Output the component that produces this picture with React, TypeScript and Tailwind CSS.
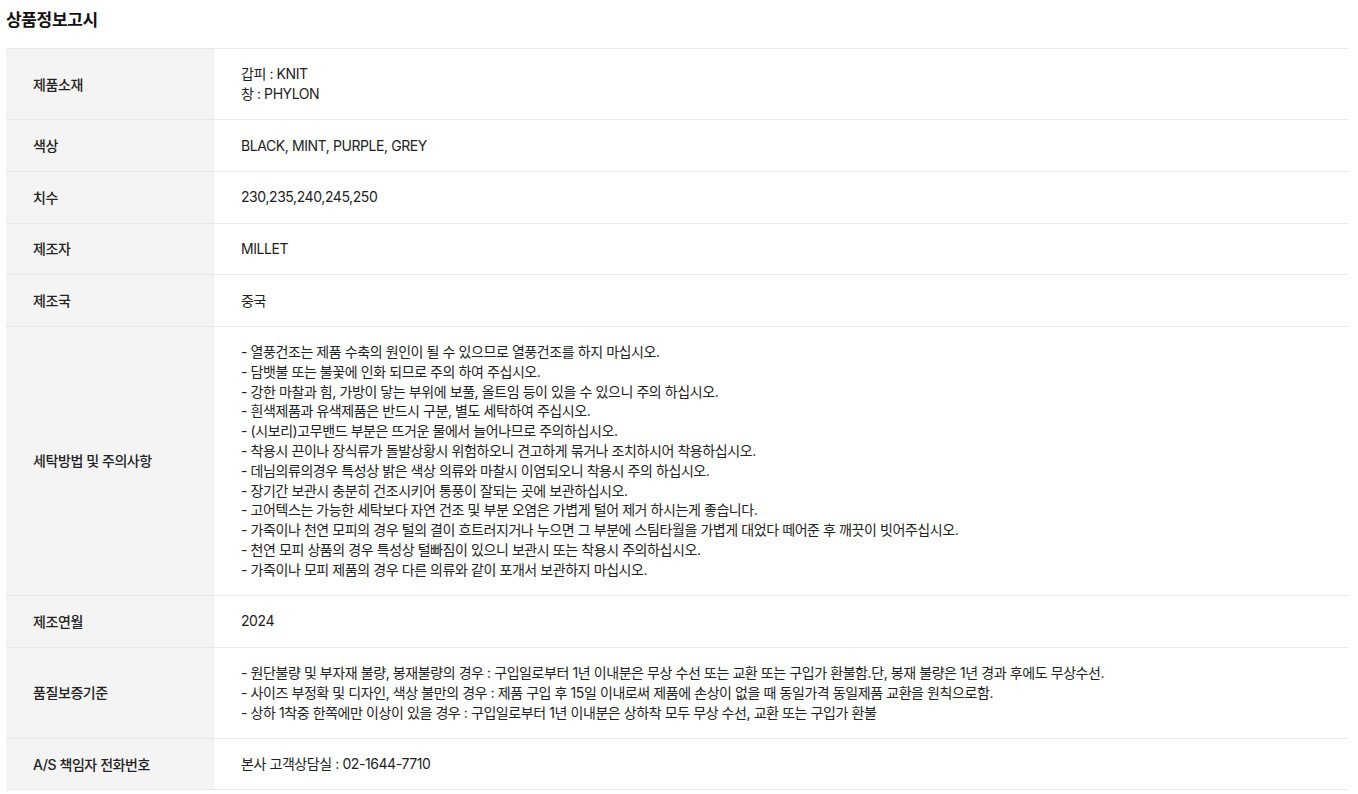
const rows: { label: string; lines: string[] }[] = [
  { label: "제품소재", lines: ["갑피 : KNIT", "창 : PHYLON"] },
  { label: "색상", lines: ["BLACK, MINT, PURPLE, GREY"] },
  { label: "치수", lines: ["230,235,240,245,250"] },
  { label: "제조자", lines: ["MILLET"] },
  { label: "제조국", lines: ["중국"] },
  {
    label: "세탁방법 및 주의사항",
    lines: [
      "- 열풍건조는 제품 수축의 원인이 될 수 있으므로 열풍건조를 하지 마십시오.",
      "- 담뱃불 또는 불꽃에 인화 되므로 주의 하여 주십시오.",
      "- 강한 마찰과 힘, 가방이 닿는 부위에 보풀, 올트임 등이 있을 수 있으니 주의 하십시오.",
      "- 흰색제품과 유색제품은 반드시 구분, 별도 세탁하여 주십시오.",
      "- (시보리)고무밴드 부분은 뜨거운 물에서 늘어나므로 주의하십시오.",
      "- 착용시 끈이나 장식류가 돌발상황시 위험하오니 견고하게 묶거나 조치하시어 착용하십시오.",
      "- 데님의류의경우 특성상 밝은 색상 의류와 마찰시 이염되오니 착용시 주의 하십시오.",
      "- 장기간 보관시 충분히 건조시키어 통풍이 잘되는 곳에 보관하십시오.",
      "- 고어텍스는 가능한 세탁보다 자연 건조 및 부분 오염은 가볍게 털어 제거 하시는게 좋습니다.",
      "- 가죽이나 천연 모피의 경우 털의 결이 흐트러지거나 누으면 그 부분에 스팀타월을 가볍게 대었다 떼어준 후 깨끗이 빗어주십시오.",
      "- 천연 모피 상품의 경우 특성상 털빠짐이 있으니 보관시 또는 착용시 주의하십시오.",
      "- 가죽이나 모피 제품의 경우 다른 의류와 같이 포개서 보관하지 마십시오.",
    ],
  },
  { label: "제조연월", lines: ["2024"] },
  {
    label: "품질보증기준",
    lines: [
      "- 원단불량 및 부자재 불량, 봉재불량의 경우 : 구입일로부터 1년 이내분은 무상 수선 또는 교환 또는 구입가 환불함.단, 봉재 불량은 1년 경과 후에도 무상수선.",
      "- 사이즈 부정확 및 디자인, 색상 불만의 경우 : 제품 구입 후 15일 이내로써 제품에 손상이 없을 때 동일가격 동일제품 교환을 원칙으로함.",
      "- 상하 1착중 한쪽에만 이상이 있을 경우 : 구입일로부터 1년 이내분은 상하착 모두 무상 수선, 교환 또는 구입가 환불",
    ],
  },
  { label: "A/S 책임자 전화번호", lines: ["본사 고객상담실 : 02-1644-7710"] },
];

export default function App() {
  return (
    <div className="min-h-screen bg-white px-[6px] pr-[10px] text-[#222] font-['Inter','Noto_Sans_CJK_KR',sans-serif]">
      <h2 className="pt-[10px] pb-[18px] text-[17px] leading-[20px] font-bold tracking-[-0.02em] text-[#111]">
        상품정보고시
      </h2>

      <div className="border-t border-[#e8e8e8]">
        {rows.map((row) => (
          <div key={row.label} className="flex border-b border-[#e8e8e8]">
            <div className="w-[208px] shrink-0 bg-[#f4f4f4] pl-[27px] flex items-center text-[14px] font-medium tracking-[-0.03em]">
              {row.label}
            </div>
            <div className="flex-1 pl-[27px] py-[15.4px] text-[14px] leading-[19.8px] tracking-[-0.03em]">
              {row.lines.map((line, i) => (
                <div key={i}>{line}</div>
              ))}
            </div>
          </div>
        ))}
      </div>
    </div>
  );
}
